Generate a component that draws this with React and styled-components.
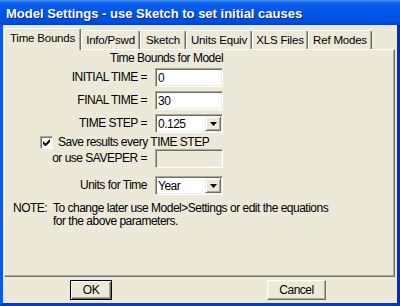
import React from 'react';
import styled, { createGlobalStyle } from 'styled-components';

const Global = createGlobalStyle`
  html, body { margin: 0; padding: 0; }
  body {
    width: 400px; height: 306px; overflow: hidden; background: #ece9d8;
    font-family: "Liberation Sans", Arial, sans-serif; color: #000;
  }
`;

const Window = styled.div`
  width: 400px; height: 306px; display: flex; flex-direction: column; box-sizing: border-box;
`;

const TitleBar = styled.div`
  height: 25px; flex: none; display: flex; align-items: center; box-sizing: border-box;
  padding: 1px 0 0 6px;
  background: linear-gradient(to bottom, #4a94f8 0, #1a6ef0 2px, #0a5ced 5px, #0055e5 55%, #0050dd 85%, #0045cc 100%);
  color: #fff; font: bold 13px "Liberation Sans", Arial, sans-serif;
  text-shadow: 1px 1px #0a2a8a;
  white-space: nowrap;
`;

const Body = styled.div`
  flex: 1; display: flex; flex-direction: column; background: #ece9d8;
  border-left: 3px solid #0c59e6; border-right: 3px solid #0527cc; border-bottom: 3px solid #0836d6;
  font-size: 12px; letter-spacing: -0.5px;
`;

const TabStrip = styled.div`
  height: 25px; flex: none; display: flex; align-items: flex-end; padding-left: 1px;
  margin-bottom: -1px; position: relative; z-index: 1;
`;

const Tab = styled.div`
  width: ${p => p.$w}px; height: ${p => (p.$active ? 22 : 19)}px;
  margin-bottom: ${p => (p.$active ? 0 : 1)}px;
  padding-bottom: ${p => (p.$active ? 3 : 0)}px;
  box-sizing: border-box; display: flex; align-items: center; justify-content: center;
  background: #ece9d8;
  border-top: 1px solid #fff; border-left: 1px solid #fff; border-right: 1px solid #716f64;
  border-radius: 2px 2px 0 0; box-shadow: inset -1px 0 #aca899;
  font-size: 11.5px; letter-spacing: -0.2px; white-space: nowrap;
`;

const Panel = styled.div`
  height: 228px; flex: none; margin: 0 2px 0 1px; box-sizing: border-box;
  display: flex; flex-direction: column; padding-top: 2px;
  border-top: 1px solid #fff; border-left: 1px solid #fff;
  border-right: 1px solid #716f64; border-bottom: 1px solid #716f64;
  box-shadow: inset -1px -1px #aca899;
  line-height: 13px;
`;

const Header = styled.div`
  padding-left: 105px; height: 13px;
`;

const FormRow = styled.div`
  display: grid; grid-template-columns: 142px 68px; column-gap: 8px; align-items: center;
  margin-top: ${p => p.$mt || 0}px;
`;

const Label = styled.div`
  text-align: right; white-space: nowrap;
`;

const Field = styled.div`
  height: 19px; box-sizing: border-box; display: flex; align-items: center;
  padding-left: 2px;
  background: ${p => (p.$disabled ? '#ece9d8' : '#fff')};
  border: 1px solid; border-color: #aca899 #fff #fff #aca899;
  box-shadow: inset 1px 1px #716f64, inset -1px -1px #f1efe2;
`;

const FieldText = styled.span`
  flex: 1; padding-top: 1px;
`;

const DropButton = styled.div`
  width: 16px; height: 15px; box-sizing: border-box; margin-right: 1px;
  display: flex; align-items: center; justify-content: center;
  background: #ece9d8;
  border: 1px solid; border-color: #f1efe2 #716f64 #716f64 #f1efe2;
  box-shadow: inset 1px 1px #fff, inset -1px -1px #aca899;
`;

const CheckRow = styled.div`
  display: flex; align-items: center; gap: 5px; padding-left: 35px; height: 13px; margin-top: 3px;
`;

const CheckBox = styled.div`
  width: 13px; height: 13px; box-sizing: border-box; background: #fff;
  display: flex; align-items: center; justify-content: center;
  border: 1px solid; border-color: #aca899 #fff #fff #aca899;
  box-shadow: inset 1px 1px #716f64, inset -1px -1px #f1efe2;
`;

const Note = styled.div`
  display: grid; grid-template-columns: 40px auto; padding-left: 8px; margin-top: 7px;
`;

const ButtonRow = styled.div`
  display: flex; padding-left: 67px; gap: 155px; margin-top: 3px;
`;

const Button = styled.div`
  width: ${p => p.$w}px; height: 20px; box-sizing: border-box;
  display: flex; align-items: center; justify-content: center;
  background: #ece9d8;
  border: 1px solid; border-color: ${p => (p.$default ? '#000' : '#fff #716f64 #716f64 #fff')};
  box-shadow: ${p =>
    p.$default
      ? 'inset 1px 1px #fff, inset -1px -1px #716f64, inset -2px -2px #aca899'
      : 'inset -1px -1px #aca899, inset 1px 1px #f1efe2'};
`;

const Arrow = () => (
  <svg width="7" height="4" viewBox="0 0 7 4">
    <path d="M0 0h7L3.5 4z" fill="#000" />
  </svg>
);

const Check = () => (
  <svg width="7" height="7" viewBox="0 0 7 7">
    <path d="M0 2v3l2 2h1l4-4V0L2.5 4.5z" fill="#000" />
  </svg>
);

const tabs = [
  ['Time Bounds', 77],
  ['Info/Pswd', 59],
  ['Sketch', 46],
  ['Units Equiv', 66],
  ['XLS Files', 56],
  ['Ref Modes', 64],
];

export default function App() {
  return (
    <Window>
      <Global />
      <TitleBar>Model Settings - use Sketch to set initial causes</TitleBar>
      <Body>
        <TabStrip>
          {tabs.map(([t, w], i) => (
            <Tab key={t} $w={w} $active={i === 0}>{t}</Tab>
          ))}
        </TabStrip>
        <Panel>
          <Header>Time Bounds for Model</Header>
          <FormRow $mt={3}>
            <Label>INITIAL TIME =</Label>
            <Field><FieldText>0</FieldText></Field>
          </FormRow>
          <FormRow $mt={4}>
            <Label>FINAL TIME =</Label>
            <Field><FieldText>30</FieldText></Field>
          </FormRow>
          <FormRow $mt={4}>
            <Label>TIME STEP =</Label>
            <Field><FieldText>0.125</FieldText><DropButton><Arrow /></DropButton></Field>
          </FormRow>
          <CheckRow>
            <CheckBox><Check /></CheckBox>
            <span>Save results every TIME STEP</span>
          </CheckRow>
          <FormRow>
            <Label>or use SAVEPER =</Label>
            <Field $disabled />
          </FormRow>
          <FormRow $mt={8}>
            <Label>Units for Time</Label>
            <Field><FieldText>Year</FieldText><DropButton><Arrow /></DropButton></Field>
          </FormRow>
          <Note>
            <span>NOTE:</span>
            <span>To change later use Model&gt;Settings or edit the equations<br />for the above parameters.</span>
          </Note>
        </Panel>
        <ButtonRow>
          <Button $w={42} $default>OK</Button>
          <Button $w={59}>Cancel</Button>
        </ButtonRow>
      </Body>
    </Window>
  );
}
